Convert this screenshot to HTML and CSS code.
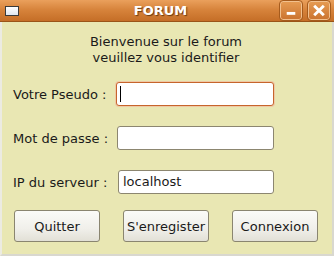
FILE: index.html
```html
<!DOCTYPE html>
<html>
<head>
<meta charset="utf-8">
<link rel="stylesheet" href="styles.css">
</head>
<body>
<div class="window">
  <div class="titlebar">
    <div class="app-icon"></div>
    <div class="title">FORUM</div>
    <div class="tb-btn">
      <svg width="21" height="18" viewBox="0 0 21 18"><rect x="6" y="10" width="9" height="3" fill="#fff"/></svg>
    </div>
    <div class="tb-btn">
      <svg width="21" height="18" viewBox="0 0 21 18"><path d="M6.5 4.5 L14.5 12.5 M14.5 4.5 L6.5 12.5" stroke="#fff" stroke-width="3" stroke-linecap="square"/></svg>
    </div>
  </div>
  <div class="content">
    <div class="welcome">Bienvenue sur le forum<br>veuillez vous identifier</div>
    <div class="form">
      <label class="lbl">Votre Pseudo :</label>
      <div class="field focused"><span class="caret"></span></div>
      <label class="lbl">Mot de passe :</label>
      <div class="field"></div>
      <label class="lbl">IP du serveur :</label>
      <div class="field shifted">localhost</div>
    </div>
    <div class="buttons">
      <div class="btn">Quitter</div>
      <div class="btn">S'enregister</div>
      <div class="btn">Connexion</div>
    </div>
  </div>
</div>
</body>
</html>
```
FILE: styles.css
```css
html, body {
  margin: 0;
  padding: 0;
  background: #e8e6b2;
}
.window {
  width: 334px;
  height: 256px;
  box-sizing: border-box;
  background: #e9e7b3;
  font-family: "DejaVu Sans", sans-serif;
  font-size: 13px;
  color: #1a1a1a;
  border-left: 2px solid #ecebe2;
  border-right: 2px solid #d9d8cf;
  border-bottom: 2px solid #d9d8cf;
  display: flex;
  flex-direction: column;
}
.titlebar {
  height: 22px;
  margin: 0 -2px;
  background: linear-gradient(#eaa05c, #d7843c 45%, #c56e27);
  border-bottom: 1px solid #9a5418;
  box-sizing: border-box;
  display: flex;
  align-items: center;
  padding: 0 4px 0 5px;
  gap: 4px;
}
.app-icon {
  width: 12px;
  height: 8px;
  border: 1px solid #3a3a3a;
  background: linear-gradient(#ffffff, #dfe6f0);
  margin-top: 1px;
}
.title {
  flex: 1;
  text-align: center;
  color: #ffffff;
  font-weight: bold;
  font-size: 13px;
  text-shadow: 1px 1px 1px #6b3a10;
  padding-left: 24px;
}
.tb-btn {
  width: 20px;
  height: 17px;
  border: 1px solid #f2c08d;
  outline: 1px solid #a55b1d;
  border-radius: 3px;
  background: linear-gradient(#e59a52, #cc7530);
  display: flex;
  align-items: center;
  justify-content: center;
  margin-left: 2px;
}
.tb-btn svg { display: block; }
.content {
  flex: 1;
  padding: 12px 0 0 9px;
}
.welcome {
  text-align: center;
  line-height: 16px;
  margin-right: 11px;
}
.form {
  display: grid;
  grid-template-columns: 106px 157px;
  row-gap: 20px;
  margin-top: 16px;
  align-items: center;
}
.lbl {
  padding-left: 2px;
}
.field {
  height: 24px;
  box-sizing: border-box;
  background: #ffffff;
  border: 1px solid #8c8670;
  border-radius: 3px;
  padding: 0 4px;
  line-height: 22px;
  display: flex;
  align-items: center;
}
.field.focused {
  margin-left: -1px;
  border-color: #c6652c;
  box-shadow: 0 0 0 1px #efc9a5;
}
.field.shifted {
  margin-left: 1px;
}
.caret {
  width: 1px;
  height: 16px;
  background: #000;
  margin-left: -1px;
}
.buttons {
  display: flex;
  gap: 23px;
  margin-top: 16px;
  padding-left: 3px;
}
.btn {
  width: 86px;
  height: 32px;
  box-sizing: border-box;
  border: 1px solid #8a8570;
  border-radius: 3px;
  background: linear-gradient(#fbfbf8, #f0efea 60%, #e2e0d6);
  display: flex;
  align-items: center;
  justify-content: center;
}
```
